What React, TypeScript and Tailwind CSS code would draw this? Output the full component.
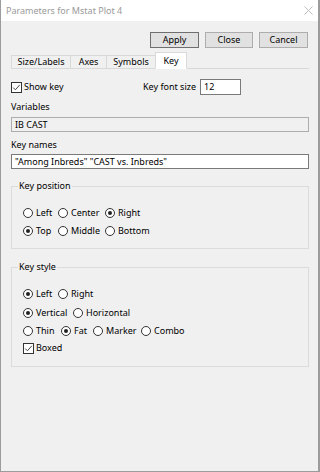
import React from "react";

const font = { fontFamily: '"Noto Sans", "Open Sans", sans-serif' };

function Radio({ checked, label, w }: { checked?: boolean; label: string; w: string }) {
  return (
    <div className={`flex items-center h-[12px] ${w}`}>
      <span className="w-[10px] h-[10px] rounded-full border border-[#333333] bg-white flex items-center justify-center shrink-0">
        {checked && <span className="w-[4px] h-[4px] rounded-full bg-[#222222]" />}
      </span>
      <span className="ml-[3px] text-[9px] leading-[12px] text-black whitespace-nowrap">{label}</span>
    </div>
  );
}

function Check({ label }: { label: string }) {
  return (
    <div className="flex items-center h-[12px]">
      <span className="w-[11px] h-[11px] border border-[#333333] bg-white flex items-center justify-center shrink-0">
        <svg width="9" height="9" viewBox="0 0 9 9">
          <path d="M1.2 4.6 L3.4 6.8 L7.8 1.8" fill="none" stroke="#333" strokeWidth="0.9" />
        </svg>
      </span>
      <span className="ml-[2px] text-[9px] leading-[12px] text-black whitespace-nowrap">{label}</span>
    </div>
  );
}

export default function App() {
  return (
    <div
      className="w-[320px] h-[472px] bg-[#f0f0f0] border-l border-r-2 border-b border-[#9c9c9c] flex flex-col overflow-hidden"
      style={font}
    >
      <div className="h-[21px] bg-white flex items-center justify-between pl-[5px] pr-[5px] shrink-0">
        <span className="text-[9px] text-[#9a9a9a] leading-[12px]">Parameters for Mstat Plot 4</span>
        <svg width="9" height="9" viewBox="0 0 9 9">
          <path d="M0.5 0.5 L8.5 8.5 M8.5 0.5 L0.5 8.5" stroke="#bdbdbd" strokeWidth="1" />
        </svg>
      </div>
      <div className="flex flex-col pl-[10px] pr-[9px]">
        <div className="flex justify-end gap-[6px] mt-[11px] pr-[1px]">
          <button className="w-[49px] h-[16px] bg-[#e1e1e1] border border-[#6f6f6f] text-[9px] leading-[12px] text-black">Apply</button>
          <button className="w-[48px] h-[16px] bg-[#e1e1e1] border border-[#adadad] text-[9px] leading-[12px] text-black">Close</button>
          <button className="w-[49px] h-[16px] bg-[#e1e1e1] border border-[#adadad] text-[9px] leading-[12px] text-black">Cancel</button>
        </div>
        <div className="flex items-end h-[17px] mt-[4px] border-b border-[#d9d9d9]">
          <div className="w-[59px] h-[14px] -mb-px border border-[#d9d9d9] border-r-0 flex items-center justify-center text-[9px] text-black">Size/Labels</div>
          <div className="w-[36px] h-[14px] -mb-px border border-[#d9d9d9] border-r-0 flex items-center justify-center text-[9px] text-black">Axes</div>
          <div className="w-[50px] h-[14px] -mb-px border border-[#d9d9d9] flex items-center justify-center text-[9px] text-black">Symbols</div>
          <div className="w-[32px] h-[17px] -mb-px border border-[#d9d9d9] border-b-white bg-white flex items-center justify-center text-[9px] text-black -ml-px">Key</div>
        </div>
        <div className="flex items-center h-[16px] mt-[10px]">
          <div className="w-[132px]">
            <Check label="Show key" />
          </div>
          <span className="text-[9px] text-black w-[57px]">Key font size</span>
          <div className="w-[41px] h-[16px] bg-white border border-[#7a7a7a] text-[9px] leading-[14px] pl-[3px] text-black">12</div>
        </div>
        <div className="mt-[6px] h-[12px] text-[9px] leading-[12px] text-black">Variables</div>
        <div className="mt-[4px] h-[15px] border border-[#adadad] bg-[#f0f0f0] text-[9px] leading-[13px] pl-[3px] text-black">IB CAST</div>
        <div className="mt-[7px] h-[12px] text-[9px] leading-[12px] text-black">Key names</div>
        <div className="mt-[3px] h-[15px] border border-[#7a7a7a] bg-white text-[9px] leading-[13px] pl-[3px] text-black">"Among Inbreds" "CAST vs. Inbreds"</div>

        <div className="relative mt-[17px] border border-[#dcdcdc] pl-[11px] pt-[20px] pb-[11px]">
          <span className="absolute left-[6px] -top-[7px] bg-[#f0f0f0] px-[1px] text-[9px] leading-[12px] text-black">Key position</span>
          <div className="flex">
            <Radio label="Left" w="w-[35px]" />
            <Radio label="Center" w="w-[47px]" />
            <Radio label="Right" checked w="w-[47px]" />
          </div>
          <div className="flex mt-[6px]">
            <Radio label="Top" checked w="w-[35px]" />
            <Radio label="Middle" w="w-[47px]" />
            <Radio label="Bottom" w="w-[47px]" />
          </div>
        </div>

        <div className="relative mt-[18px] border border-[#dcdcdc] pl-[11px] pt-[20px] pb-[12px]">
          <span className="absolute left-[6px] -top-[7px] bg-[#f0f0f0] px-[1px] text-[9px] leading-[12px] text-black">Key style</span>
          <div className="flex">
            <Radio label="Left" checked w="w-[35px]" />
            <Radio label="Right" w="w-[47px]" />
          </div>
          <div className="flex mt-[7px]">
            <Radio label="Vertical" checked w="w-[50px]" />
            <Radio label="Horizontal" w="w-[60px]" />
          </div>
          <div className="flex mt-[6px]">
            <Radio label="Thin" w="w-[38px]" />
            <Radio label="Fat" checked w="w-[32px]" />
            <Radio label="Marker" w="w-[48px]" />
            <Radio label="Combo" w="w-[50px]" />
          </div>
          <div className="mt-[5px]">
            <Check label="Boxed" />
          </div>
        </div>
      </div>
    </div>
  );
}
